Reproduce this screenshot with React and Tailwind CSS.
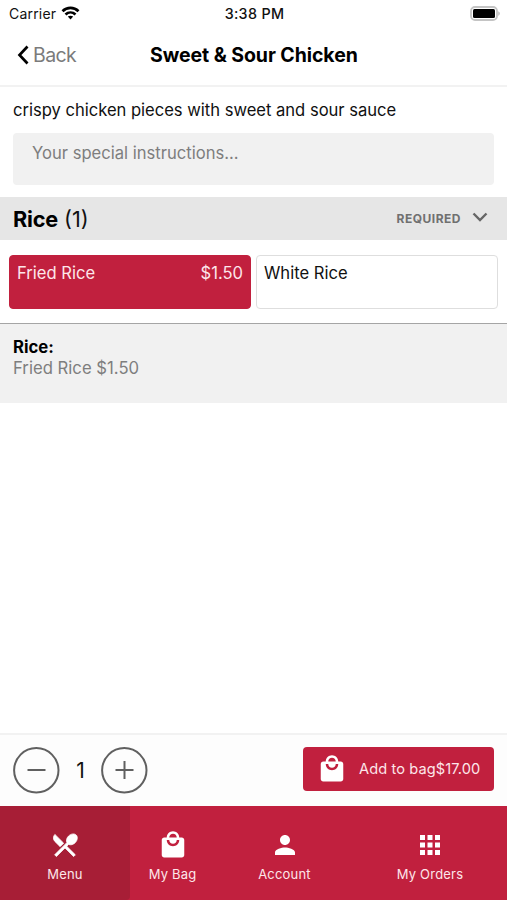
import React, { useState } from "react";
import { MdLocalMall, MdPerson, MdApps } from "react-icons/md";

const rice = [
  { name: "Fried Rice", price: "$1.50" },
  { name: "White Rice", price: "" },
];

// Crossed knife and spoon, slightly heavier than the stock icon
const MenuIcon = ({ className }) => (
  <svg className={className} viewBox="0 0 24 24" fill="currentColor" stroke="currentColor" strokeWidth="0.6">
    <path d="M8.1 13.34l2.83-2.83L3.91 3.5c-1.56 1.56-1.56 4.09 0 5.66l4.19 4.18zm6.78-1.81c1.53.71 3.68.21 5.27-1.38 1.91-1.91 2.28-4.65.81-6.12-1.46-1.46-4.2-1.1-6.12.81-1.59 1.59-2.09 3.74-1.38 5.27L3.7 19.87l1.41 1.41L12 14.41l6.88 6.88 1.41-1.41L13.41 13l1.47-1.47z" />
  </svg>
);

const tabs = [
  { label: "Menu", icon: MenuIcon, className: "w-[130px] bg-[#a71e36] rounded-br-sm" },
  { label: "My Bag", icon: MdLocalMall, className: "w-[85px]" },
  { label: "Account", icon: MdPerson, className: "w-[139px]" },
  { label: "My Orders", icon: MdApps, className: "w-[152px]" },
];

const StatusBar = () => (
  <div className="flex h-7 items-center justify-between pl-[9px] pr-[7px] text-[14px]">
    <div className="flex w-40 items-center gap-[5px] pb-px">
      <span className="tracking-[0.2px]">Carrier</span>
      <svg className="mb-px h-[14px] w-[19px]" viewBox="0 0 18 14" fill="none" stroke="black" strokeWidth="2.7">
        <path d="M1 5.2C5.5.8 12.5.8 17 5.2" />
        <path d="M4 8.5C6.9 5.8 11.1 5.8 14 8.5" />
        <path d="M6.3 10.6C7.9 9.3 10.1 9.3 11.7 10.6L9 13.4Z" fill="black" stroke="none" />
      </svg>
    </div>
    <span className="text-[14.3px] font-medium tracking-[0.35px]">3:38 PM</span>
    <div className="flex w-40 justify-end">
      <svg className="mb-[2px] h-[15px] w-[30px]" viewBox="0 0 30 15" fill="none">
        <rect x="1" y="1" width="26" height="13" rx="4" stroke="#c4c4c4" strokeWidth="1.8" />
        <rect x="3" y="3" width="22" height="9" rx="1.5" fill="black" />
        <path d="M28.3 5.2C30.2 6 30.2 9 28.3 9.8Z" fill="#b5b5b5" />
      </svg>
    </div>
  </div>
);

const Header = () => (
  <div className="flex h-[59px] items-center border-b-2 border-[#f2f2f2] pb-[3px]">
    <button className="flex w-[150px] items-center pl-[17px] text-[19.5px] tracking-[-0.6px] text-[#7b7b7b]">
      <svg className="mr-1 h-5 w-3" viewBox="0 0 12 20" fill="none" stroke="black" strokeWidth="2.7">
        <path d="M10.5 1.5L2.5 10L10.5 18.5" />
      </svg>
      <span className="pt-px">Back</span>
    </button>
    <h1 className="mt-[2px] text-[19.5px] font-bold tracking-[-0.07px] whitespace-nowrap text-black">Sweet &amp; Sour Chicken</h1>
  </div>
);

const App = () => {
  const [selected, setSelected] = useState(0);
  const [count, setCount] = useState(1);

  return (
    <div className="flex h-[900px] w-[507px] flex-col overflow-hidden bg-white font-['Inter','Liberation_Sans',sans-serif] text-[#111111]">
      <StatusBar />
      <Header />

      <div className="px-[13px] pt-[11px]">
        <p className="text-[16.6px] leading-6 tracking-[-0.02px]">crispy chicken pieces with sweet and sour sauce</p>
        <textarea
          className="mt-[11px] block h-[52px] w-[481px] resize-none rounded-sm bg-[#f1f1f1] px-[19px] pt-2 text-[16.6px] leading-6 placeholder:text-[#7e7e7e] outline-none"
          placeholder="Your special instructions..."
        />
      </div>

      <div className="mt-3 flex h-[43px] items-center justify-between bg-[#e6e6e6] pr-[19px] pl-[13px]">
        <h2 className="pt-px text-[21.7px]">
          <span className="font-bold tracking-[-0.2px] text-black">Rice</span> (1)
        </h2>
        <div className="flex items-center text-xs font-bold text-[#707070]">
          <span className="tracking-[0.5px]">REQUIRED</span>
          <svg className="mb-1 ml-[11px] h-[10px] w-4" viewBox="0 0 16 10" fill="none" stroke="#666" strokeWidth="2.4">
            <path d="M1.5 1.5L8 8L14.5 1.5" />
          </svg>
        </div>
      </div>

      <div className="flex gap-[5px] px-[9px] pt-[15px] pb-[14px]">
        {rice.map((item, i) => (
          <button
            key={item.name}
            onClick={() => setSelected(i)}
            className={`flex h-[54px] flex-1 justify-between rounded border px-[7px] pt-[5px] text-[16.6px] leading-6 ${
              selected === i ? "border-[#c1203e] bg-[#c1203e] text-[#fde6ea]" : "border-[#dedede] bg-white"
            }`}
          >
            <span>{item.name}</span>
            <span>{item.price}</span>
          </button>
        ))}
      </div>

      <div className="h-20 border-t border-[#a5a5a5] bg-[#f1f1f1] px-[13px] pt-[13px] text-[16.7px] leading-[21px]">
        <p className="font-bold text-black">Rice:</p>
        <p className="text-[#7e7e7e]">{rice[selected].name} {rice[selected].price}</p>
      </div>

      <div className="flex-1" />

      {/* Quantity and add to bag */}
      <div className="flex h-[73px] items-center justify-between border-t-2 border-[#f2f2f2] bg-[#fdfdfd] px-[13px]">
        <div className="flex items-center">
          <button onClick={() => setCount(Math.max(1, count - 1))}>
            <svg className="h-[47px] w-[47px]" viewBox="0 0 47 47" fill="none" stroke="#606060" strokeWidth="2">
              <circle cx="23.3" cy="23.3" r="22.2" />
              <path d="M14.5 23H32.5" />
            </svg>
          </button>
          <span className="w-[41px] text-center text-[21px]">{count}</span>
          <button onClick={() => setCount(count + 1)}>
            <svg className="h-[47px] w-[47px]" viewBox="0 0 47 47" fill="none" stroke="#606060" strokeWidth="2">
              <circle cx="23.3" cy="23.3" r="22.2" />
              <path d="M14.5 23H32.5M23.5 14V32" />
            </svg>
          </button>
        </div>
        <button className="mb-[3px] flex h-11 w-[191px] items-center rounded-sm bg-[#c1203e] pl-[14px] text-[14.6px] tracking-[0.1px] whitespace-nowrap text-[#fde6ea]">
          <MdLocalMall className="mr-3 size-[30px] shrink-0 text-white" />
          <span className="pt-[2px]">Add to bag$17.00</span>
        </button>
      </div>

      <div className="flex h-[94px] bg-[#c1203e] text-[#fde6ea]">
        {tabs.map(({ label, icon: Icon, className }) => (
          <button key={label} className={`flex flex-col items-center pt-6 ${className}`}>
            <Icon className="size-[30px] text-white" />
            <span className="mt-1 text-[13px] leading-5 tracking-[0.2px]">{label}</span>
          </button>
        ))}
      </div>
    </div>
  );
};

export default App;
